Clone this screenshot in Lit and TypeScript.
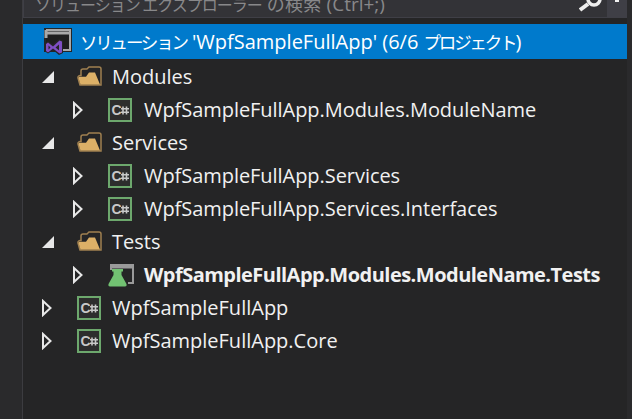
import { LitElement, html, css } from "lit";
import { customElement } from "lit/decorators.js";

const csIcon = html`<svg class="ico" viewBox="0 0 24 24" width="24" height="24">
  <rect x="1" y="1" width="22" height="22" fill="#2d2d2d" stroke="#6da86d" stroke-width="2"/>
  <text x="3.500" y="17" font-family="Liberation Sans" font-weight="700" font-size="14" fill="#c8c8c8">C</text>
  <path d="M15 8.500v8M18.500 8.500v8M13 10.800h8M13 14.200h8" stroke="#c8c8c8" stroke-width="1.600" fill="none"/>
</svg>`;

const folder = html`<svg class="ico" viewBox="0 0 26 24" width="26" height="24">
  <path d="M4 20 L2 13 Q1.500 11 4 10.500 L5 10.500 L5 6 Q5 4 7 4 L11 4 L13 2 L23 2 Q25 2 25 4 L25 20 Z" fill="#252526" stroke="#a08050" stroke-width="1.500"/>
  <path d="M4.500 19.500 L2.500 13 Q2.300 11.800 4 11.800 L10 11.800 L13 7.500 L19 7.500 L24 19.500 Z" fill="#dcb067"/>
  <path d="M6 10.500V6.200Q6 5 7.200 5H11.500L13.500 3H23.200Q24 3 24 4V17L19.800 6.500H12.500L9.500 10.500Z" fill="#252526"/>
</svg>`;

const flask = html`<svg class="ico" viewBox="0 0 26 24" width="26" height="24">
  <path d="M3 7V2H25V20H20" fill="none" stroke="#9a9a9a" stroke-width="2"/>
  <path d="M3 4H25" fill="none" stroke="#9a9a9a" stroke-width="3"/>
  <path d="M4 6H15V8.500H13.500V12L18.500 21Q19 23.500 17 23.500H2Q0 23.500 .5 21L5.500 12V8.500H4Z" fill="#72c272"/>
</svg>`;

const solution = html`<svg class="ico" viewBox="0 0 28 28" width="28" height="28">
  <rect x="1" y="1" width="26" height="22" fill="#1e1e1e" stroke="#252526" stroke-width="2"/>
  <path d="M2 2H26V22H14" fill="none" stroke="#a8a8a8" stroke-width="2"/>
  <path d="M2 2V10M2 5H26" fill="none" stroke="#a8a8a8" stroke-width="3"/>
  <path d="M1 15.500L4 13L9 16.500L15 11L19 12.500V25L15 27L9 22L4 25.500L1 23.500Z" fill="#252526"/>
  <path d="M2 16L4 14.500L9 18.500L15.500 12.500L18 13.500V24.500L15.500 25.500L9 20.500L4 24.500L2 23ZM4.500 17.500V21.500L6.500 19.500ZM15 16.500L11.500 19.500L15 22.500Z" fill="#7f4fc4" fill-rule="evenodd"/>
</svg>`;

type Row = { depth: number; twisty: "open" | "closed"; icon: unknown; label: string; bold?: boolean };
const rows: Row[] = [
  { depth: 0, twisty: "open", icon: folder, label: "Modules" },
  { depth: 1, twisty: "closed", icon: csIcon, label: "WpfSampleFullApp.Modules.ModuleName" },
  { depth: 0, twisty: "open", icon: folder, label: "Services" },
  { depth: 1, twisty: "closed", icon: csIcon, label: "WpfSampleFullApp.Services" },
  { depth: 1, twisty: "closed", icon: csIcon, label: "WpfSampleFullApp.Services.Interfaces" },
  { depth: 0, twisty: "open", icon: folder, label: "Tests" },
  { depth: 1, twisty: "closed", icon: flask, label: "WpfSampleFullApp.Modules.ModuleName.Tests", bold: true },
  { depth: 0, twisty: "closed", icon: csIcon, label: "WpfSampleFullApp" },
  { depth: 0, twisty: "closed", icon: csIcon, label: "WpfSampleFullApp.Core" },
];

const twisty = (kind: string) =>
  kind === "open"
    ? html`<svg viewBox="0 0 14 14" width="14" height="14"><path d="M1 13L13 1V13Z" fill="#e8e8e8"/></svg>`
    : html`<svg viewBox="0 0 12 18" width="12" height="18"><path d="M2 2L9.500 9L2 16Z" fill="none" stroke="#e8e8e8" stroke-width="2"/></svg>`;

@customElement("app-root")
export class AppRoot extends LitElement {
  static styles = css`
    :host {
      display: block;
      width: 632px;
      height: 419px;
      overflow: hidden;
      background: #2d2d30;
      font-family: "Open Sans", "Noto Sans CJK JP", sans-serif;
      font-size: 20px;
      color: #f1f1f1;
    }
    .frame {
      display: flex;
      height: 419px;
    }
    .gutter {
      width: 22px;
      flex: none;
      background: #2a2a2c;
      border-right: 1px solid #3c3c40;
    }
    .main {
      flex: 1;
      min-width: 0;
      display: flex;
      flex-direction: column;
      background: #252526;
    }
    .edge {
      flex: none;
      width: 5px;
      background: #2a2a2c;
    }
    .search {
      height: 17px;
      flex: none;
      display: flex;
      background: #333337;
      border-left: 1px solid #3f3f46;
      border-bottom: 1px solid #3f3f46;
      overflow: hidden;
    }
    .search-text {
      flex: 1;
      padding-left: 11px;
      color: #88888a;
      white-space: nowrap;
      font-size: 19px;
      line-height: 24px;
      margin-top: -9px;
    }
    .kana {
      font-family: "Noto Sans CJK JP", sans-serif;
      font-size: 17.500px;
      letter-spacing: -2.200px;
    }
    .search-text .kana {
      font-size: 16px;
      letter-spacing: -1px;
    }
    .search-text .kanji {
      font-family: "Noto Sans CJK JP", sans-serif;
      font-size: 18px;
      letter-spacing: 0.300px;
    }
    .mag {
      flex: none;
      width: 36px;
      padding-left: 8px;
      box-sizing: border-box;
      display: flex;
      align-items: flex-start;
    }
    .drop {
      flex: none;
      width: 20px;
      background: #3f3f46;
      display: flex;
      justify-content: center;
    }
    .dot { width: 4px; height: 2px; background: #f1f1f1; }
    .gap { height: 6px; flex: none; }
    .selected {
      height: 35px;
      flex: none;
      display: flex;
      align-items: center;
      background: #007acc;
      color: #fff;
      padding-left: 21px;
      gap: 8px;
      white-space: nowrap;
    }
    .rows { padding-top: 1px; }
    .row {
      height: 33px;
      display: flex;
      align-items: center;
      white-space: nowrap;
    }
    .d0 { padding-left: 18px; }
    .d1 { padding-left: 49px; }
    .tw {
      width: 18px;
      margin-right: 17px;
      flex: none;
      display: flex;
      align-items: center;
    }
    .closed .tw { margin-right: 18px; }
    .ico { flex: none; display: block; }
    .label { margin-left: 11px; }
    .open .label { margin-left: 10px; }
    .d1 .label { margin-left: 12px; letter-spacing: -0.050px; }
    .d1 .label.bold { margin-left: 10px; font-weight: 700; letter-spacing: -0.520px; }
  `;

  render() {
    return html`<div class="frame">
      <div class="gutter"></div>
      <div class="main">
        <div class="search">
          <div class="search-text"><span class="kana">ソリューション エクスプローラー</span> <span class="kanji">の検索</span> (Ctrl+;)</div>
          <div class="mag">
            <svg viewBox="0 0 24 12" width="24" height="12"><path d="M1 10L9 4" stroke="#eee" stroke-width="4"/><circle cx="15" cy="-1" r="6" fill="none" stroke="#eee" stroke-width="3.500"/></svg>
          </div>
          <div class="drop"><div class="dot"></div></div>
        </div>
        <div class="gap"></div>
        <div class="selected">${solution}<span><span class="kana">ソリューション</span> 'WpfSampleFullApp' (6/6 <span class="kana">プロジェクト</span>)</span></div>
        <div class="rows">
          ${rows.map(
            (r) => html`<div class="row d${r.depth} ${r.twisty}">
              <div class="tw">${twisty(r.twisty)}</div>
              ${r.icon}
              <span class="label ${r.bold ? "bold" : ""}">${r.label}</span>
            </div>`
          )}
        </div>
      </div>
      <div class="edge"></div>
    </div>`;
  }
}
